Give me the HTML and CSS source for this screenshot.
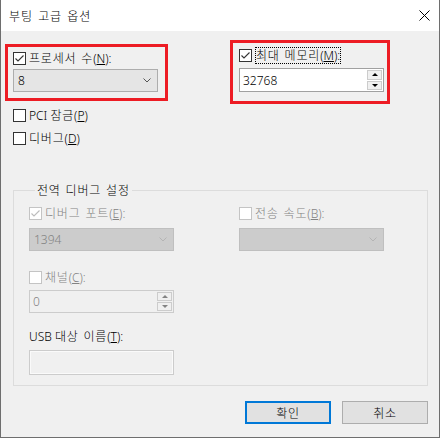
FILE: index.html
```html
<!DOCTYPE html>
<html lang="ko">
<head>
  <meta charset="UTF-8">
  <title>부팅 고급 옵션</title>
  <link rel="stylesheet" href="styles.css">
</head>
<body>
  <div class="window">
    <div class="titlebar">
      <span class="title">부팅 고급 옵션</span>
      <svg class="close" width="11" height="11" viewBox="0 0 11 11"><path d="M0.5 0.5L10.5 10.5M10.5 0.5L0.5 10.5" stroke="#000" stroke-width="1"/></svg>
    </div>

    <div class="content">
      <div class="top">
        <div class="col col-left">
          <label class="check">
            <span class="box"><svg width="11" height="11" viewBox="0 0 11 11"><path d="M1.5 5.5L4 8L9.5 2.5" fill="none" stroke="#333" stroke-width="1.1"/></svg></span>
            <span><span class="ko">프로세서 수</span>(<u>N</u>):</span>
          </label>
          <div class="combo">
            <span>8</span>
            <svg width="8" height="5" viewBox="0 0 8 5"><path d="M0.5 0.5L4 4L7.5 0.5" fill="none" stroke="#555"/></svg>
          </div>
        </div>
        <div class="col col-right">
          <label class="check">
            <span class="box"><svg width="11" height="11" viewBox="0 0 11 11"><path d="M1.5 5.5L4 8L9.5 2.5" fill="none" stroke="#333" stroke-width="1.1"/></svg></span>
            <span class="focus"><span class="ko">최대 메모리</span>(<u>M</u>):</span>
          </label>
          <div class="spin">
            <span>32768</span>
            <div class="spin-btns">
              <span class="spin-btn"><i class="tri-up"></i></span>
              <span class="spin-btn"><i class="tri-down"></i></span>
            </div>
          </div>
        </div>
      </div>

      <div class="opts">
        <label class="check"><span class="box"></span><span>PCI <span class="ko">잠금</span>(<u>P</u>)</span></label>
        <label class="check"><span class="box"></span><span><span class="ko">디버그</span>(<u>D</u>)</span></label>
      </div>

      <fieldset class="group">
        <legend><span class="ko">전역 디버그 설정</span></legend>
        <div class="group-grid">
          <div class="col">
            <label class="check disabled">
              <span class="box"><svg width="11" height="11" viewBox="0 0 11 11"><path d="M1.5 5.5L4 8L9.5 2.5" fill="none" stroke="#bcbcbc" stroke-width="1.1"/></svg></span>
              <span><span class="ko">디버그 포트</span>(<u>E</u>):</span>
            </label>
            <div class="combo disabled">
              <span>1394</span>
              <svg width="8" height="5" viewBox="0 0 8 5"><path d="M0.5 0.5L4 4L7.5 0.5" fill="none" stroke="#b4b4b4"/></svg>
            </div>
            <label class="check disabled row-channel"><span class="box"></span><span><span class="ko">채널</span>(<u>C</u>):</span></label>
            <div class="spin disabled">
              <span>0</span>
              <div class="spin-btns">
                <span class="spin-btn"><i class="tri-up"></i></span>
                <span class="spin-btn"><i class="tri-down"></i></span>
              </div>
            </div>
            <div class="usb-label">USB <span class="ko">대상 이름</span>(<u>T</u>):</div>
            <div class="textbox"></div>
          </div>
          <div class="col">
            <label class="check disabled"><span class="box"></span><span><span class="ko">전송 속도</span>(<u>B</u>):</span></label>
            <div class="combo disabled">
              <span></span>
              <svg width="8" height="5" viewBox="0 0 8 5"><path d="M0.5 0.5L4 4L7.5 0.5" fill="none" stroke="#b4b4b4"/></svg>
            </div>
          </div>
        </div>
      </fieldset>

      <div class="buttons">
        <button class="btn default"><span class="ko">확인</span></button>
        <button class="btn"><span class="ko">취소</span></button>
      </div>
    </div>

    <!-- annotation frames drawn over the dialog -->
    <div class="mark mark-cpu"></div>
    <div class="mark mark-mem"></div>
  </div>
</body>
</html>
```

FILE: styles.css
```css
body {
  margin: 0;
  background-color: #fff;
  font-family: "Noto Sans", "Noto Sans CJK KR", sans-serif;
  font-size: 12px;
  font-weight: 300;
  color: #000;
}

/* hangul runs are a touch wider and lighter in the original system font */
.ko {
  font-weight: 300;
  letter-spacing: 0.8px;
  word-spacing: 1px;
}

.window {
  position: relative;
  box-sizing: border-box;
  width: 440px;
  height: 438px;
  border: 1px solid #6e6e6e;
  border-top: none;
  background-color: #f0f0f0;
  display: flex;
  flex-direction: column;
}

.titlebar {
  height: 31px;
  flex-shrink: 0;
  background-color: #fff;
  display: flex;
  align-items: center;
  justify-content: space-between;
  padding: 0 8px 0 8px;
}

.title {
  font-family: "Noto Sans CJK KR", sans-serif;
  font-size: 12px;
  font-weight: 300;
  line-height: 17px;
  margin-top: -1px;
  letter-spacing: 0.9px;
  word-spacing: 1px;
}

.close {
  display: block;
  margin-right: 1px;
}

.content {
  flex: 1;
  padding: 0 11px 0 12px;
}

.col {
  display: flex;
  flex-direction: column;
  width: 145px;
}

.top {
  display: flex;
  gap: 81px;
  padding-top: 16px;
}

.col-left {
  padding-top: 3px;
}

.check {
  display: flex;
  align-items: center;
  height: 17px;
  line-height: 17px;
  white-space: nowrap;
}

.check .box {
  box-sizing: border-box;
  width: 13px;
  height: 13px;
  border: 1px solid #333;
  background-color: #fff;
  margin-right: 3px;
  flex-shrink: 0;
  display: flex;
  align-items: center;
  justify-content: center;
}

.check .box svg {
  display: block;
}

.check.disabled {
  color: #838383;
}

.check.disabled .box {
  border-color: #c4c4c4;
  background-color: #fff;
}

.focus {
  outline: 1px dotted #000;
  outline-offset: -1px;
  padding: 0 1px;
}

.combo {
  box-sizing: border-box;
  height: 23px;
  margin-top: 2px;
  background-color: #e5e5e5;
  border: 1px solid #adadad;
  display: flex;
  align-items: center;
  justify-content: space-between;
  padding: 0 6px 0 4px;
}

.combo.disabled {
  background-color: #cccccc;
  border-color: #bfbfbf;
  color: #838383;
  margin-top: 6px;
}

.col-right .spin {
  margin-top: 4px;
  height: 24px;
}

.spin {
  box-sizing: border-box;
  height: 23px;
  background-color: #fff;
  border: 1px solid #a0a0a0;
  display: flex;
  align-items: center;
  justify-content: space-between;
  padding: 0 1px 0 3px;
}

.spin-btns {
  display: flex;
  flex-direction: column;
  gap: 1px;
  height: 100%;
  box-sizing: border-box;
  padding: 1px 0;
}

.spin-btn {
  flex: 1;
  width: 15px;
  box-sizing: border-box;
  border: 1px solid #cccccc;
  background-color: #f0f0f0;
  display: flex;
  align-items: center;
  justify-content: center;
}

.tri-up, .tri-down {
  width: 0;
  height: 0;
  border-left: 3px solid transparent;
  border-right: 3px solid transparent;
}

.tri-up {
  border-bottom: 3px solid #000;
}

.tri-down {
  border-top: 3px solid #000;
}

.spin.disabled {
  margin-top: 4px;
  border-color: #cccccc;
  background-color: #f0f0f0;
  color: #838383;
}

.spin.disabled .tri-up {
  border-bottom-color: #838383;
}

.spin.disabled .tri-down {
  border-top-color: #838383;
}

.opts {
  display: flex;
  flex-direction: column;
  gap: 6px;
  margin-top: 15px;
}

.group {
  margin: 35px 0 0 0;
  padding: 6px 0 10px 15px;
  border: 1px solid #dcdcdc;
  width: 415px;
  box-sizing: border-box;
  min-width: 0;
}

.group legend {
  margin-left: 6px;
  padding: 0 2px;
  line-height: 17px;
}

.group-grid {
  display: flex;
  gap: 65px;
  align-items: flex-start;
}

.row-channel {
  margin-top: 18px;
}

.usb-label {
  margin-top: 15px;
  height: 17px;
  line-height: 17px;
}

.textbox {
  box-sizing: border-box;
  height: 25px;
  margin-top: 5px;
  border: 1px solid #cccccc;
  box-shadow: inset 0 0 0 1px #fafafa;
  background-color: #f0f0f0;
}

.buttons {
  display: flex;
  justify-content: flex-end;
  gap: 11px;
  margin-top: 15px;
}

.btn {
  box-sizing: border-box;
  width: 86px;
  height: 23px;
  background-color: #e1e1e1;
  border: 1px solid #adadad;
  font-family: "Noto Sans CJK KR", sans-serif;
  font-size: 12px;
  padding: 0;
  color: #000;
}

.btn.default {
  border: 2px solid #0078d7;
}

.mark {
  position: absolute;
  box-sizing: border-box;
  border: 3px solid #ed1c24;
}

.mark-cpu {
  left: 4px;
  top: 44px;
  width: 163px;
  height: 57px;
}

.mark-mem {
  left: 229px;
  top: 40px;
  width: 160px;
  height: 64px;
}
```
